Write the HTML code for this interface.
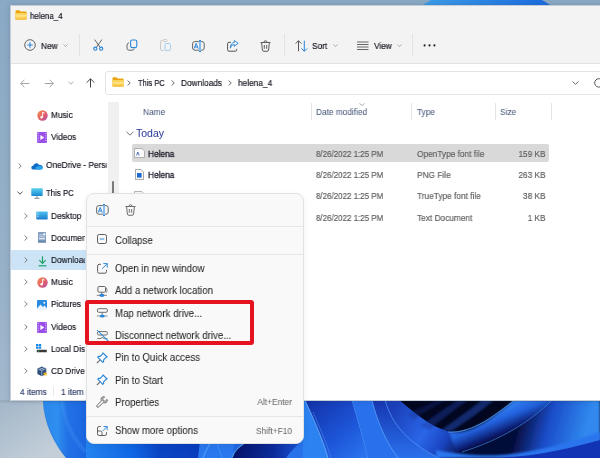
<!DOCTYPE html>
<html><head><meta charset="utf-8">
<style>
*{margin:0;padding:0;box-sizing:border-box}
html,body{width:600px;height:458px;overflow:hidden}
body{position:relative;font-family:"Liberation Sans",sans-serif;background:#8eacc6}
.a{position:absolute}
.t{position:absolute;white-space:nowrap;line-height:1;color:#12121e;-webkit-text-stroke:0.17px currentColor;will-change:transform}
svg{position:absolute;overflow:visible}
.ex{font-size:8.3px}
.mn{font-size:9.7px;color:#262626;-webkit-text-stroke:0.06px currentColor}
.sc{font-size:8.4px;color:#6b6b6b;-webkit-text-stroke:0.05px currentColor}
.gr{color:#5d5d5d}
.hd{color:#4a5a7c;-webkit-text-stroke:0.05px currentColor}
</style></head><body>
<!-- wallpaper -->
<div class="a" style="left:0;top:0;width:600px;height:458px;background:linear-gradient(180deg,#8aa9c4 0%,#97b1c8 60%,#a9bccf 100%)"></div>
<svg width="600" height="458" style="left:0;top:0">
  <defs>
    <linearGradient id="gTop" x1="0" y1="0" x2="1" y2="0">
      <stop offset="0" stop-color="#3d9ee9"/><stop offset="1" stop-color="#1a6ae0"/>
    </linearGradient>
    <linearGradient id="gB1" x1="0" y1="0" x2="1" y2="0">
      <stop offset="0" stop-color="#2f7fe6"/><stop offset="0.5" stop-color="#1f5fe0"/><stop offset="1" stop-color="#1a4fd8"/>
    </linearGradient>
  </defs>
  <polygon points="431,0 542,0 552,6 421,6" fill="url(#gTop)"/>
  <defs>
    <linearGradient id="gBase" x1="43" y1="0" x2="600" y2="0" gradientUnits="userSpaceOnUse">
      <stop offset="0" stop-color="#3b93ee"/><stop offset="0.08" stop-color="#2f82ea"/><stop offset="0.3" stop-color="#2268e2"/><stop offset="0.5" stop-color="#1f5edc"/><stop offset="1" stop-color="#1f5edc"/>
    </linearGradient>
    <linearGradient id="gDarkBand" x1="520" y1="445" x2="580" y2="400" gradientUnits="userSpaceOnUse">
      <stop offset="0" stop-color="#020620"/><stop offset="0.35" stop-color="#0a1c6a"/><stop offset="1" stop-color="#2a86ea"/>
    </linearGradient>
    <linearGradient id="gRibD" x1="470" y1="440" x2="500" y2="405" gradientUnits="userSpaceOnUse">
      <stop offset="0" stop-color="#010416"/><stop offset="0.6" stop-color="#1a48c8"/><stop offset="1" stop-color="#2a6ff0"/>
    </linearGradient>
    <linearGradient id="gMid" x1="310" y1="400" x2="360" y2="458" gradientUnits="userSpaceOnUse">
      <stop offset="0" stop-color="#1232a8"/><stop offset="0.6" stop-color="#1d55d8"/><stop offset="1" stop-color="#2a72ee"/>
    </linearGradient>
    <linearGradient id="gC" x1="395" y1="405" x2="470" y2="450" gradientUnits="userSpaceOnUse">
      <stop offset="0" stop-color="#1a3fb8"/><stop offset="0.45" stop-color="#2a66e8"/><stop offset="0.7" stop-color="#1a44c0"/><stop offset="1" stop-color="#03082a"/>
    </linearGradient>
  </defs>
  <path d="M43,400 L600,400 L600,458 L66,458 C55,445 44,425 43,400 Z" fill="url(#gBase)"/>
  <!-- left light curve -->
  <path d="M62,400 C66,420 76,438 90,452" stroke="#6ab6ff" stroke-width="1" fill="none" opacity="0.5"/>
  <!-- below menu ribbons -->
  <defs>
    <linearGradient id="gBm" x1="86" y1="0" x2="200" y2="0" gradientUnits="userSpaceOnUse">
      <stop offset="0" stop-color="#2484ee"/><stop offset="0.4" stop-color="#1066e4"/><stop offset="0.65" stop-color="#0a44c4"/><stop offset="1" stop-color="#0a3cbc"/>
    </linearGradient>
    <linearGradient id="gBm2" x1="235" y1="0" x2="300" y2="0" gradientUnits="userSpaceOnUse">
      <stop offset="0" stop-color="#04146a"/><stop offset="0.6" stop-color="#0c2c9c"/><stop offset="1" stop-color="#1a52d4"/>
    </linearGradient>
  </defs>
  <rect x="86" y="440" width="114" height="18" fill="url(#gBm)"/>
  <path d="M200,440 L235,440 L232,458 L198,458 Z" fill="#2a78ee"/>
  <path d="M203,458 C205,452 208,447 212,440" stroke="#6ab8ff" stroke-width="1" fill="none" opacity="0.7"/>
  <path d="M222,458 C220,452 218,447 216,440" stroke="#4aa0ff" stroke-width="1" fill="none" opacity="0.6"/>
  <path d="M232,458 C234,450 240,445 250,440 L300,440 L300,458 Z" fill="url(#gBm2)"/>
  <path d="M232,458 C234,450 240,445 250,440" stroke="#5ab0ff" stroke-width="1.2" fill="none" opacity="0.8"/>
  <path d="M286,458 C290,452 296,446 303,440 L303,458 Z" fill="#2a72ea"/>
  <!-- left bright area -->
  <defs>
    <linearGradient id="gGray" x1="0" y1="400" x2="40" y2="458" gradientUnits="userSpaceOnUse">
      <stop offset="0" stop-color="#a2b6c8"/><stop offset="1" stop-color="#c3ced9"/>
    </linearGradient>
    <linearGradient id="gLB" x1="45" y1="0" x2="86" y2="0" gradientUnits="userSpaceOnUse">
      <stop offset="0" stop-color="#2a88ec"/><stop offset="0.3" stop-color="#2f8ef0"/><stop offset="0.55" stop-color="#2272e6"/><stop offset="1" stop-color="#1a66e2"/>
    </linearGradient>
  </defs>
  <path d="M0,400 L44,400 C44,425 55,442 68,458 L0,458 Z" fill="url(#gGray)"/>
  <path d="M43,400 L86,400 L86,458 L66,458 C55,445 44,425 43,400 Z" fill="url(#gLB)"/>
  <path d="M43,400 C44,425 55,442 67,458" stroke="#4a6a90" stroke-width="0.6" fill="none" opacity="0.35"/>
  <path d="M62,400 C64,420 72,438 86,452" stroke="#58aaf8" stroke-width="4" fill="none" opacity="0.18"/>
  <rect x="0" y="400" width="86" height="2.5" fill="#000" opacity="0.06"/>
  <!-- mid ribbons 300-375 -->
  <path d="M303,400 L305,400 C314,420 323,440 328,458 L303,458 Z" fill="#2c82f0"/>
  <path d="M305,400 L352,400 C358,420 364,440 368,458 L328,458 C323,440 314,420 305,400 Z" fill="url(#gMid)"/>
  <path d="M305,400 C314,420 323,440 328,458" stroke="#7cc0ff" stroke-width="1" fill="none" opacity="0.7"/>
  <path d="M313,412 C320,428 327,444 331,458" stroke="#5aaaff" stroke-width="0.8" fill="none" opacity="0.5"/>
  <path d="M352,400 C358,420 364,440 368,458" stroke="#6ab4ff" stroke-width="1" fill="none" opacity="0.7"/>
  <path d="M352,400 L385,400 C392,425 410,445 440,458 L368,458 C364,440 358,420 352,400 Z" fill="#2870ec"/>
  <defs><linearGradient id="gL3" x1="0" y1="400" x2="0" y2="458" gradientUnits="userSpaceOnUse"><stop offset="0" stop-color="#1636b0"/><stop offset="1" stop-color="#2a70ec"/></linearGradient></defs>
  <path d="M372,400 L385,400 C392,425 410,445 440,458 L398,458 C388,445 378,425 372,400 Z" fill="url(#gL3)"/>
  <path d="M372,400 C378,425 388,445 398,458" stroke="#6ab4ff" stroke-width="1" fill="none" opacity="0.6"/>
  <!-- ribbon C -->
  <path d="M385,400 L399,400 C412,410 428,426 450,432 C472,436 495,418 515,400 L600,400 L600,458 L440,458 C410,445 392,425 385,400 Z" fill="url(#gC)"/>
  <path d="M385,400 C392,425 410,445 440,458" stroke="#5aa8ff" stroke-width="1" fill="none" opacity="0.6"/>
  <!-- dark region -->
  <path d="M399,400 C412,410 428,426 450,432 C472,436 495,418 515,400 Z" fill="#02061f"/>
  <path d="M408,414 C420,408 432,403 438,400 L446,400 C436,406 424,412 414,420 Z" fill="#142e88" opacity="0.35" filter="url(#bl)"/>
  <path d="M420,426 C435,415 450,405 458,400 L468,400 C455,410 440,420 430,430 Z" fill="#1a3a9e" opacity="0.45" filter="url(#bl)"/>
  <path d="M440,431 C455,420 472,408 482,400 L494,400 C480,412 465,422 452,431 Z" fill="#2048b0" opacity="0.55" filter="url(#bl)"/>
  <!-- right bright ribbon below D -->
  <defs>
    <linearGradient id="gR2" x1="478" y1="417" x2="490" y2="446" gradientUnits="userSpaceOnUse">
      <stop offset="0" stop-color="#3382f4"/><stop offset="0.35" stop-color="#2260dc"/><stop offset="0.75" stop-color="#0a1a6a"/><stop offset="1" stop-color="#01030f"/>
    </linearGradient>
    <linearGradient id="gR3" x1="515" y1="432" x2="580" y2="450" gradientUnits="userSpaceOnUse">
      <stop offset="0" stop-color="#040a38"/><stop offset="0.45" stop-color="#1a4cc8"/><stop offset="1" stop-color="#3088ee"/>
    </linearGradient>
    <filter id="bl" x="-10%" y="-10%" width="120%" height="120%"><feGaussianBlur stdDeviation="1.2"/></filter>
  </defs>
  <path d="M450,433 C472,435 492,418 515,400 L600,400 L600,458 L462,458 C456,452 452,445 450,433 Z" fill="url(#gR2)" filter="url(#bl)"/>
  <path d="M440,458 C490,445 530,425 552,400 L600,400 L600,458 Z" fill="url(#gR3)" filter="url(#bl)"/>
  <path d="M448,432 C470,434 492,418 515,400" stroke="#5aa8ff" stroke-width="1.1" fill="none" opacity="0.7"/>
  <path d="M462,452 C500,440 530,422 552,400" stroke="#4a98f8" stroke-width="1" fill="none" opacity="0.6"/>
  <!-- bottom bright ribbon -->
  <path d="M436,450 C455,454 478,456 500,455 C540,452 570,442 600,432 L600,440 C570,450 540,458 500,458 L436,458 Z" fill="#2a74ee" filter="url(#bl)"/>
  <path d="M500,458 C540,456 570,448 600,440 L600,458 Z" fill="#1234b4"/>
</svg>

<!-- window -->
<div class="a" style="left:9.5px;top:5px;width:592px;height:395.5px;background:#fff;border:1px solid #c5ced6;border-right:none;box-shadow:0 0 5px rgba(40,60,90,0.22)"></div>
<div class="a" style="left:10.5px;top:6px;width:590px;height:58px;background:#f3f3f3;border-bottom:1px solid #e3e3e3"></div>

<!-- title -->
<svg width="12" height="10" style="left:15px;top:10px" viewBox="0 0 12 10">
  <path d="M0.5,1.4 Q0.5,0.3 1.6,0.3 L4,0.3 Q4.6,0.3 5,0.8 L5.6,1.6 L10.6,1.6 Q11.6,1.6 11.6,2.6 L11.6,8.4 Q11.6,9.5 10.5,9.5 L1.6,9.5 Q0.5,9.5 0.5,8.4 Z" fill="#eaa40e"/>
  <path d="M0.5,3.1 L11.6,3.1 L11.6,8.4 Q11.6,9.5 10.5,9.5 L1.6,9.5 Q0.5,9.5 0.5,8.4 Z" fill="#fdd45a"/>
  <rect x="0.5" y="5" width="11.1" height="1.6" fill="#ffe59a" opacity="0.8"/>
  <rect x="0.5" y="8.2" width="11.1" height="1.3" fill="#f3b834" opacity="0.7"/>
</svg>
<div class="t ex" style="left:29.5px;top:11.94px;font-size:9.20px;letter-spacing:0px;transform-origin:0 0;transform:scaleX(0.8607)">helena_4</div>

<!-- toolbar -->
<svg width="12" height="12" style="left:24px;top:39px" viewBox="0 0 12 12">
  <circle cx="6" cy="6" r="5.3" fill="none" stroke="#555" stroke-width="0.9"/>
  <path d="M6,3.3 V8.7 M3.3,6 H8.7" stroke="#2a86d9" stroke-width="1.1"/>
</svg>
<div class="t ex" style="left:41.3px;top:41.94px;font-size:9.20px;letter-spacing:0px;transform-origin:0 0;transform:scaleX(0.9031)">New</div>
<svg width="5" height="3" style="left:63px;top:44px" viewBox="0 0 5 3"><path d="M0.5,0.5 L2.5,2.5 L4.5,0.5" fill="none" stroke="#888" stroke-width="0.7"/></svg>
<div class="a" style="left:79px;top:34px;width:1px;height:22px;background:#e2e2e2"></div>
<!-- cut -->
<svg width="11" height="12" style="left:92.5px;top:39px" viewBox="0 0 11 12">
  <path d="M1.6,0.6 L7.2,8.4 M8.9,0.6 L3.3,8.4" stroke="#555" stroke-width="0.9" fill="none"/>
  <circle cx="2.3" cy="9.7" r="1.6" fill="none" stroke="#2a86d9" stroke-width="1.1"/>
  <circle cx="8.2" cy="9.7" r="1.6" fill="none" stroke="#2a86d9" stroke-width="1.1"/>
</svg>
<!-- copy -->
<svg width="12" height="12" style="left:125.5px;top:39px" viewBox="0 0 12 12">
  <rect x="4.6" y="1" width="6.2" height="7.6" rx="1.6" fill="none" stroke="#2a86d9" stroke-width="1.1"/>
  <path d="M3,3.8 Q1,4.2 1,6.2 L1,9.2 Q1,11.2 3,11.2 L6,11.2 Q8,11.2 8.4,9.6" fill="none" stroke="#666" stroke-width="1"/>
</svg>
<!-- paste (disabled) -->
<svg width="11" height="12" style="left:159.5px;top:39px" viewBox="0 0 11 12">
  <path d="M2.5,1.5 L1.5,1.5 Q0.6,1.5 0.6,2.5 L0.6,10.5 Q0.6,11.4 1.5,11.4 L4,11.4" fill="none" stroke="#c4c4c4" stroke-width="0.9"/>
  <rect x="3" y="0.5" width="4" height="2" rx="0.6" fill="none" stroke="#c4c4c4" stroke-width="0.8"/>
  <rect x="5" y="4.5" width="5.4" height="7" rx="1" fill="none" stroke="#9ccaf0" stroke-width="0.9"/>
</svg>
<!-- rename -->
<svg width="13" height="12" style="left:192px;top:39.5px" viewBox="0 0 13 12">
  <rect x="0.6" y="1.6" width="11.6" height="8.6" rx="2.2" fill="none" stroke="#666" stroke-width="1"/>
  <rect x="6.9" y="1" width="2.2" height="10" fill="#f3f3f3"/>
  <path d="M8,0.4 V11.6 M7,0.6 H9 M7,11.4 H9" stroke="#2a86d9" stroke-width="1.05"/>
  <path d="M2.2,8.6 L4.2,3.4 L6.2,8.6 M2.9,7 H5.5" fill="none" stroke="#2a86d9" stroke-width="1"/>
</svg>
<!-- share -->
<svg width="12" height="12" style="left:226.5px;top:39.5px" viewBox="0 0 12 12">
  <path d="M4,2.3 L2,2.3 Q0.6,2.3 0.6,3.7 L0.6,9.8 Q0.6,11.2 2,11.2 L8.3,11.2 Q9.7,11.2 9.7,9.8 L9.7,8.8" fill="none" stroke="#555" stroke-width="1"/>
  <path d="M3.3,8.2 Q3.6,4.6 7.3,4.4 L7.3,6.3 L11.2,3.3 L7.3,0.5 L7.3,2.4 Q3.6,2.7 3.3,8.2 Z" fill="none" stroke="#2a86d9" stroke-width="0.95" stroke-linejoin="round"/>
</svg>
<!-- delete -->
<svg width="11" height="12" style="left:260px;top:39.5px" viewBox="0 0 11 12">
  <path d="M0.5,2.5 H10.5 M4,2.3 Q4,0.7 5.5,0.7 Q7,0.7 7,2.3 M1.6,2.7 L2.4,10 Q2.6,11.3 3.9,11.3 L7.1,11.3 Q8.4,11.3 8.6,10 L9.4,2.7 M4.3,5 V8.8 M6.7,5 V8.8" fill="none" stroke="#555" stroke-width="0.95"/>
</svg>
<div class="a" style="left:283.5px;top:34px;width:1px;height:22px;background:#e2e2e2"></div>
<!-- sort -->
<svg width="13" height="12" style="left:294.5px;top:39.5px" viewBox="0 0 13 12">
  <path d="M3.5,11.3 V0.8 M0.6,3.6 L3.5,0.7 L6.4,3.6" fill="none" stroke="#555" stroke-width="1"/>
  <path d="M9.3,0.7 V11.2 M6.4,8.4 L9.3,11.3 L12.2,8.4" fill="none" stroke="#2a86d9" stroke-width="1"/>
</svg>
<div class="t ex" style="left:312px;top:41.94px;font-size:9.20px;letter-spacing:0px;transform-origin:0 0;transform:scaleX(0.9027)">Sort</div>
<svg width="5" height="3" style="left:332.5px;top:44px" viewBox="0 0 5 3"><path d="M0.5,0.5 L2.5,2.5 L4.5,0.5" fill="none" stroke="#888" stroke-width="0.7"/></svg>
<!-- view -->
<svg width="12" height="10" style="left:356.5px;top:40.5px" viewBox="0 0 12 10">
  <path d="M0,1 H11.5 M0,3.5 H11.5 M0,6 H11.5 M0,8.5 H11.5" stroke="#555" stroke-width="0.9"/>
</svg>
<div class="t ex" style="left:373.5px;top:41.94px;font-size:9.20px;letter-spacing:0px;transform-origin:0 0;transform:scaleX(0.9035)">View</div>
<svg width="5" height="3" style="left:396.5px;top:44px" viewBox="0 0 5 3"><path d="M0.5,0.5 L2.5,2.5 L4.5,0.5" fill="none" stroke="#888" stroke-width="0.7"/></svg>
<div class="a" style="left:412px;top:34px;width:1px;height:22px;background:#e2e2e2"></div>
<svg width="13" height="3" style="left:423px;top:43.5px" viewBox="0 0 13 3">
  <circle cx="1.6" cy="1.4" r="1.05" fill="#222"/><circle cx="6.5" cy="1.4" r="1.05" fill="#222"/><circle cx="11.4" cy="1.4" r="1.05" fill="#222"/>
</svg>

<!-- nav arrows -->
<svg width="10" height="9" style="left:19.5px;top:78.5px" viewBox="0 0 10 9"><path d="M9.3,4.5 H0.8 M4.4,0.8 L0.7,4.5 L4.4,8.2" fill="none" stroke="#9a9a9a" stroke-width="0.9"/></svg>
<svg width="10" height="9" style="left:44px;top:78.5px" viewBox="0 0 10 9"><path d="M0.7,4.5 H9.2 M5.6,0.8 L9.3,4.5 L5.6,8.2" fill="none" stroke="#9a9a9a" stroke-width="0.9"/></svg>
<svg width="6" height="4" style="left:67.5px;top:81px" viewBox="0 0 6 4"><path d="M0.5,0.7 L3,3.2 L5.5,0.7" fill="none" stroke="#9a9a9a" stroke-width="0.8"/></svg>
<svg width="9" height="10" style="left:86px;top:78px" viewBox="0 0 9 10"><path d="M4.5,9.5 V0.9 M0.7,4.6 L4.5,0.8 L8.3,4.6" fill="none" stroke="#3a3a3a" stroke-width="0.95"/></svg>

<!-- address bar -->
<div class="a" style="left:105px;top:71px;width:500px;height:24px;background:#fff;border:1px solid #e3e3e3;border-radius:3px"></div>
<svg width="12" height="10" style="left:111.5px;top:77px" viewBox="0 0 12 10">
  <path d="M0.5,1.4 Q0.5,0.3 1.6,0.3 L4,0.3 Q4.6,0.3 5,0.8 L5.6,1.6 L10.6,1.6 Q11.6,1.6 11.6,2.6 L11.6,8.4 Q11.6,9.5 10.5,9.5 L1.6,9.5 Q0.5,9.5 0.5,8.4 Z" fill="#eaa40e"/>
  <path d="M0.5,3.1 L11.6,3.1 L11.6,8.4 Q11.6,9.5 10.5,9.5 L1.6,9.5 Q0.5,9.5 0.5,8.4 Z" fill="#fdd45a"/>
  <rect x="0.5" y="5" width="11.1" height="1.6" fill="#ffe59a" opacity="0.8"/>
  <rect x="0.5" y="8.2" width="11.1" height="1.3" fill="#f3b834" opacity="0.7"/>
</svg>
<svg width="4" height="6" style="left:127px;top:79.5px" viewBox="0 0 4 6"><path d="M0.7,0.5 L3.2,3 L0.7,5.5" fill="none" stroke="#444" stroke-width="0.8"/></svg>
<div class="t ex" style="left:137.7px;top:79.2px;font-size:9.20px;letter-spacing:0px;transform-origin:0 0;transform:scaleX(0.82)">This PC</div>
<svg width="4" height="6" style="left:170.5px;top:79.5px" viewBox="0 0 4 6"><path d="M0.7,0.5 L3.2,3 L0.7,5.5" fill="none" stroke="#444" stroke-width="0.8"/></svg>
<div class="t ex" style="left:181px;top:79.2px;font-size:9.20px;letter-spacing:0px;transform-origin:0 0;transform:scaleX(0.9034)">Downloads</div>
<svg width="4" height="6" style="left:228px;top:79.5px" viewBox="0 0 4 6"><path d="M0.7,0.5 L3.2,3 L0.7,5.5" fill="none" stroke="#444" stroke-width="0.8"/></svg>
<div class="t ex" style="left:238.3px;top:79.2px;font-size:9.20px;letter-spacing:0px;transform-origin:0 0;transform:scaleX(0.9033)">helena_4</div>
<svg width="7" height="4" style="left:571.5px;top:80.5px" viewBox="0 0 7 4"><path d="M0.5,0.5 L3.5,3.3 L6.5,0.5" fill="none" stroke="#555" stroke-width="0.85"/></svg>
<svg width="10" height="10" style="left:593.5px;top:77.5px" viewBox="0 0 10 10"><path d="M8.6,3 A4.2,4.2 0 1 0 8.9,6" fill="none" stroke="#555" stroke-width="1"/><path d="M8.8,0.6 V3.3 H6.1" fill="none" stroke="#555" stroke-width="1"/></svg>

<!-- nav pane scrollbar track -->
<div class="a" style="left:107.5px;top:102px;width:11.5px;height:298px;background:#f0f0f0"></div>
<div class="a" style="left:112.3px;top:181px;width:1.8px;height:12.5px;background:#7a7a7a;border-radius:1px"></div>


<!-- nav highlight -->
<div class="a" style="left:11px;top:250px;width:96.5px;height:20px;background:#cde4f7"></div>
<!-- nav items -->
<svg width="11" height="11" style="left:36.5px;top:110px" viewBox="0 0 11 11">
  <defs><linearGradient id="gMu" x1="0" y1="0" x2="1" y2="1"><stop offset="0" stop-color="#f7904a"/><stop offset="0.55" stop-color="#e0606a"/><stop offset="1" stop-color="#b04ab0"/></linearGradient></defs>
  <circle cx="5.5" cy="5.5" r="5.2" fill="url(#gMu)"/>
  <path d="M5.6,2.3 V7.2 M5.6,2.3 L7.6,3.1" stroke="#fff" stroke-width="0.9" fill="none"/><circle cx="4.6" cy="7.3" r="1.2" fill="#fff"/>
</svg>
<div class="t ex" style="left:51px;top:111.34px;font-size:9.20px;letter-spacing:0px;transform-origin:0 0;transform:scaleX(0.9030)">Music</div>
<svg width="10" height="11" style="left:37px;top:131.5px" viewBox="0 0 10 11">
  <rect x="0" y="0" width="10" height="11" rx="0.8" fill="#9a50e8"/>
  <path d="M1.1,1 V10.5 M8.9,1 V10.5" stroke="#e8d8ff" stroke-width="1" stroke-dasharray="1 1.3"/>
  <path d="M3.4,3 L7.2,5.5 L3.4,8 Z" fill="#fff"/>
</svg>
<div class="t ex" style="left:51px;top:133.44px;font-size:9.20px;letter-spacing:0px;transform-origin:0 0;transform:scaleX(0.9027)">Videos</div>
<svg width="4" height="6" style="left:18px;top:162.5px" viewBox="0 0 4 6"><path d="M0.7,0.5 L3.2,3 L0.7,5.5" fill="none" stroke="#666" stroke-width="0.85"/></svg>
<svg width="12" height="8" style="left:30.5px;top:161.5px" viewBox="0 0 12 8">
  <path d="M2.5,7.6 Q0.3,7.6 0.3,5.7 Q0.3,4 2.2,3.8 Q2.8,1.3 5.3,1.3 Q7,1.3 7.9,2.7 Q11.7,2.6 11.7,5.3 Q11.7,7.6 9.4,7.6 Z" fill="#0f6cc8"/><path d="M4.5,7.6 Q4.2,4.6 7.2,4.2 Q9.2,3.2 10.8,4.4 Q11.7,5 11.7,6 Q11.6,7.6 9.4,7.6 Z" fill="#2aa6ee"/>
</svg>
<div class="t ex" style="left:45.6px;top:161.34px;width:68.08px;overflow:hidden;font-size:9.20px;letter-spacing:0px;transform-origin:0 0;transform:scaleX(0.9033)">OneDrive - Personal</div>
<svg width="6" height="4" style="left:17px;top:191px" viewBox="0 0 6 4"><path d="M0.5,0.6 L3,3.2 L5.5,0.6" fill="none" stroke="#333" stroke-width="0.85"/></svg>
<svg width="12" height="11" style="left:30.5px;top:188px" viewBox="0 0 12 11">
  <defs><linearGradient id="gPc" x1="0" y1="0" x2="0" y2="1"><stop offset="0" stop-color="#5ad0f0"/><stop offset="1" stop-color="#1a8ad0"/></linearGradient></defs>
  <rect x="0.3" y="0.3" width="11.4" height="7.6" rx="0.6" fill="url(#gPc)"/>
  <path d="M6,8 V9.8 M3.5,10.3 H8.5" stroke="#6a7a8a" stroke-width="0.9"/>
</svg>
<div class="t ex" style="left:45.6px;top:188.94px;font-size:9.20px;letter-spacing:0px;transform-origin:0 0;transform:scaleX(0.85)">This PC</div>
<svg width="4" height="6" style="left:23.5px;top:212.7px" viewBox="0 0 4 6"><path d="M0.7,0.5 L3.2,3 L0.7,5.5" fill="none" stroke="#666" stroke-width="0.85"/></svg>
<div class="t ex" style="left:51px;top:211.64px;width:38.24px;overflow:hidden;font-size:9.20px;letter-spacing:0px;transform-origin:0 0;transform:scaleX(0.9022)">Desktop</div>
<svg width="4" height="6" style="left:23.5px;top:235.0px" viewBox="0 0 4 6"><path d="M0.7,0.5 L3.2,3 L0.7,5.5" fill="none" stroke="#666" stroke-width="0.85"/></svg>
<div class="t ex" style="left:51px;top:233.94px;width:38.20px;overflow:hidden;font-size:9.20px;letter-spacing:0px;transform-origin:0 0;transform:scaleX(0.9032)">Documents</div>
<svg width="4" height="6" style="left:23.5px;top:257.0px" viewBox="0 0 4 6"><path d="M0.7,0.5 L3.2,3 L0.7,5.5" fill="none" stroke="#666" stroke-width="0.85"/></svg>
<div class="t ex" style="left:51px;top:255.94px;width:38.19px;overflow:hidden;font-size:9.20px;letter-spacing:0px;transform-origin:0 0;transform:scaleX(0.9034)">Downloads</div>
<svg width="4" height="6" style="left:23.5px;top:279.2px" viewBox="0 0 4 6"><path d="M0.7,0.5 L3.2,3 L0.7,5.5" fill="none" stroke="#666" stroke-width="0.85"/></svg>
<div class="t ex" style="left:51px;top:278.14px;width:38.21px;overflow:hidden;font-size:9.20px;letter-spacing:0px;transform-origin:0 0;transform:scaleX(0.9030)">Music</div>
<svg width="4" height="6" style="left:23.5px;top:301.4px" viewBox="0 0 4 6"><path d="M0.7,0.5 L3.2,3 L0.7,5.5" fill="none" stroke="#666" stroke-width="0.85"/></svg>
<div class="t ex" style="left:51px;top:300.34px;width:38.20px;overflow:hidden;font-size:9.20px;letter-spacing:0px;transform-origin:0 0;transform:scaleX(0.9031)">Pictures</div>
<svg width="4" height="6" style="left:23.5px;top:323.6px" viewBox="0 0 4 6"><path d="M0.7,0.5 L3.2,3 L0.7,5.5" fill="none" stroke="#666" stroke-width="0.85"/></svg>
<div class="t ex" style="left:51px;top:322.54px;width:38.22px;overflow:hidden;font-size:9.20px;letter-spacing:0px;transform-origin:0 0;transform:scaleX(0.9027)">Videos</div>
<svg width="4" height="6" style="left:23.5px;top:346.0px" viewBox="0 0 4 6"><path d="M0.7,0.5 L3.2,3 L0.7,5.5" fill="none" stroke="#666" stroke-width="0.85"/></svg>
<div class="t ex" style="left:51px;top:344.94px;width:38.22px;overflow:hidden;font-size:9.20px;letter-spacing:0px;transform-origin:0 0;transform:scaleX(0.9027)">Local Disk (C:)</div>
<svg width="4" height="6" style="left:23.5px;top:368.4px" viewBox="0 0 4 6"><path d="M0.7,0.5 L3.2,3 L0.7,5.5" fill="none" stroke="#666" stroke-width="0.85"/></svg>
<div class="t ex" style="left:51px;top:367.34px;width:38.20px;overflow:hidden;font-size:9.20px;letter-spacing:0px;transform-origin:0 0;transform:scaleX(0.9031)">CD Drive (D:)</div>

<svg width="12" height="9" style="left:36px;top:211px" viewBox="0 0 12 9">
  <defs><linearGradient id="gDk" x1="0" y1="0" x2="0" y2="1"><stop offset="0" stop-color="#4fc3f0"/><stop offset="1" stop-color="#1a7ccc"/></linearGradient></defs>
  <rect x="0.3" y="0.5" width="11.4" height="8" rx="0.8" fill="url(#gDk)"/>
  <path d="M1.5,2 H2.5 M1.5,3.8 H2.5 M1.5,5.6 H2.5" stroke="#fff" stroke-width="0.8"/>
</svg>
<svg width="9" height="11" style="left:38px;top:232px" viewBox="0 0 9 11">
  <rect x="0" y="0" width="8" height="10.6" rx="0.6" fill="#7f9dc0"/>
  <rect x="1" y="2.2" width="4" height="1.2" fill="#c0d0e2"/>
  <rect x="1" y="4.2" width="6" height="1.2" fill="#c0d0e2"/>
  <rect x="1" y="6" width="6" height="1.4" fill="#e0e8f2"/>
  <rect x="5.3" y="1.3" width="2" height="2" fill="#ffffff"/>
  <rect x="0" y="8.6" width="8" height="2" fill="#6a88ae"/>
</svg>
<svg width="9" height="11" style="left:37.5px;top:255.5px" viewBox="0 0 9 11">
  <path d="M4.5,0.3 V7.2 M1.3,4.2 L4.5,7.4 L7.7,4.2" fill="none" stroke="#1aa36a" stroke-width="1.2"/>
  <path d="M0.6,9.8 H8.4" stroke="#1aa36a" stroke-width="1.2"/>
</svg>
<svg width="11" height="11" style="left:36.5px;top:277px" viewBox="0 0 11 11">
  <circle cx="5.5" cy="5.5" r="5.2" fill="url(#gMu)"/>
  <path d="M5.6,2.3 V7.2 M5.6,2.3 L7.6,3.1" stroke="#fff" stroke-width="0.9" fill="none"/><circle cx="4.6" cy="7.3" r="1.2" fill="#fff"/>
</svg>
<svg width="10" height="10" style="left:37px;top:299.5px" viewBox="0 0 10 10">
  <rect x="0" y="0" width="10" height="10" rx="0.8" fill="#2a8ae0"/>
  <path d="M0,8.5 L3.5,4.5 L6,7 L7.5,5.6 L10,8.2 V10 H0 Z" fill="#eaf4ff"/>
  <circle cx="7.3" cy="2.8" r="1" fill="#eaf4ff"/>
</svg>
<svg width="10" height="11" style="left:37px;top:321.5px" viewBox="0 0 10 11">
  <rect x="0" y="0" width="10" height="11" rx="0.8" fill="#9a50e8"/>
  <path d="M1.1,1 V10.5 M8.9,1 V10.5" stroke="#e8d8ff" stroke-width="1" stroke-dasharray="1 1.3"/>
  <path d="M3.4,3 L7.2,5.5 L3.4,8 Z" fill="#fff"/>
</svg>
<svg width="11" height="9" style="left:36px;top:343.5px" viewBox="0 0 11 9">
  <rect x="0" y="0" width="2.4" height="2.2" rx="0.3" fill="#1a8ae8"/><rect x="2.8" y="0" width="2.4" height="2.2" rx="0.3" fill="#1a8ae8"/>
  <rect x="0" y="2.6" width="2.4" height="2.2" rx="0.3" fill="#1a8ae8"/><rect x="2.8" y="2.6" width="2.4" height="2.2" rx="0.3" fill="#1a8ae8"/>
  <rect x="0.8" y="5.7" width="10" height="2.6" rx="0.4" fill="#3a3a3a"/>
  <path d="M2,7 H3.2" stroke="#3ad06a" stroke-width="0.9"/>
</svg>
<svg width="11" height="11" style="left:36.5px;top:365.5px" viewBox="0 0 11 11">
  <path d="M4.8,0.4 L9.3,2.4 L9.3,7.8 L4.8,10.2 L0.4,8 L0.4,2.6 Z" fill="#2f4f7e"/>
  <path d="M0.4,2.6 L4.8,4.8 L9.3,2.4 M4.8,4.8 V10.2 M2.2,1.6 L7,3.6 M7.2,1.4 L2.8,3.8" stroke="#c8d8ea" stroke-width="0.6" fill="none"/>
  <path d="M8.2,5.6 L8.9,7.2 L10.6,7.3 L9.3,8.4 L9.8,10.1 L8.2,9.1 L6.7,10.1 L7.1,8.4 L5.8,7.3 L7.5,7.2 Z" fill="#f5b51c"/>
</svg>
<!-- status bar -->
<div class="t ex gr" style="left:19.6px;top:387.94px;color:#34406a;font-size:9.20px;letter-spacing:0px;transform-origin:0 0;transform:scaleX(0.9030)">4 items</div>
<div class="a" style="left:53px;top:387px;width:1px;height:9px;background:#e8e8e8"></div>
<div class="t ex gr" style="left:61px;top:387.94px;color:#34406a;width:27.68px;overflow:hidden;font-size:9.20px;letter-spacing:0px;transform-origin:0 0;transform:scaleX(0.9032)">1 item selected</div>


<!-- file list header -->
<div class="t ex hd" style="left:142.5px;top:107.94px;font-size:9.20px;letter-spacing:0px;transform-origin:0 0;transform:scaleX(0.9031)">Name</div>
<div class="a" style="left:311px;top:102.5px;width:1px;height:17.5px;background:#e5e5e5"></div>
<svg width="6" height="3" style="left:359px;top:102.5px" viewBox="0 0 6 3"><path d="M0.5,0.5 L3,2.5 L5.5,0.5" fill="none" stroke="#8a8a8a" stroke-width="0.7"/></svg>
<div class="t ex hd" style="left:316px;top:107.94px;font-size:9.20px;letter-spacing:0px;transform-origin:0 0;transform:scaleX(0.9033)">Date modified</div>
<div class="a" style="left:411px;top:102.5px;width:1px;height:17.5px;background:#e5e5e5"></div>
<div class="t ex hd" style="left:417px;top:107.94px;font-size:9.20px;letter-spacing:0px;transform-origin:0 0;transform:scaleX(0.9035)">Type</div>
<div class="a" style="left:495px;top:102.5px;width:1px;height:17.5px;background:#e5e5e5"></div>
<div class="t ex hd" style="left:499.8px;top:107.94px;font-size:9.20px;letter-spacing:0px;transform-origin:0 0;transform:scaleX(0.9030)">Size</div>
<div class="a" style="left:551px;top:102.5px;width:1px;height:17.5px;background:#e5e5e5"></div>
<!-- group header -->
<svg width="8" height="5" style="left:125.5px;top:130.8px" viewBox="0 0 8 5"><path d="M0.5,0.6 L4,4.2 L7.5,0.6" fill="none" stroke="#555" stroke-width="0.8"/></svg>
<div class="t" style="left:136.3px;top:128px;font-size:10.5px;color:#2f3d9c;-webkit-text-stroke:0.05px currentColor">Today</div>
<!-- selected row -->
<div class="a" style="left:131.5px;top:144px;width:417px;height:18px;background:#d9d9d9;border-radius:2px"></div>
<div class="t ex" style="left:148.3px;top:149.74px;color:#121222;-webkit-text-stroke:0.28px currentColor;font-size:9.20px;letter-spacing:0px;transform-origin:0 0;transform:scaleX(0.9029)">Helena</div>
<div class="t ex gr" style="left:316px;top:149.74px;letter-spacing:0px;font-size:9.20px;transform-origin:0 0;transform:scaleX(0.8658)">8/26/2022 1:25 PM</div>
<div class="t ex gr" style="left:417px;top:149.74px;font-size:9.20px;letter-spacing:0px;transform-origin:0 0;transform:scaleX(0.9030)">OpenType font file</div>
<div class="t ex gr" style="left:446px;top:149.74px;width:99.6px;text-align:right;font-size:9.20px;letter-spacing:0px;transform-origin:100% 0;transform:scaleX(0.9031)">159 KB</div>
<div class="t ex" style="left:148.3px;top:170.94px;color:#121222;-webkit-text-stroke:0.28px currentColor;font-size:9.20px;letter-spacing:0px;transform-origin:0 0;transform:scaleX(0.9029)">Helena</div>
<div class="t ex gr" style="left:316px;top:170.94px;letter-spacing:0px;font-size:9.20px;transform-origin:0 0;transform:scaleX(0.8658)">8/26/2022 1:25 PM</div>
<div class="t ex gr" style="left:417px;top:170.94px;font-size:9.20px;letter-spacing:0px;transform-origin:0 0;transform:scaleX(0.9028)">PNG File</div>
<div class="t ex gr" style="left:446px;top:170.94px;width:99.6px;text-align:right;font-size:9.20px;letter-spacing:0px;transform-origin:100% 0;transform:scaleX(0.9031)">263 KB</div>

<div class="t ex gr" style="left:316px;top:192.44px;letter-spacing:0px;font-size:9.20px;transform-origin:0 0;transform:scaleX(0.8658)">8/26/2022 1:25 PM</div>
<div class="t ex gr" style="left:417px;top:192.44px;font-size:9.20px;letter-spacing:0px;transform-origin:0 0;transform:scaleX(0.9029)">TrueType font file</div>
<div class="t ex gr" style="left:446px;top:192.44px;width:99.6px;text-align:right;font-size:9.20px;letter-spacing:0px;transform-origin:100% 0;transform:scaleX(0.9032)">38 KB</div>

<div class="t ex gr" style="left:316px;top:213.94px;letter-spacing:0px;font-size:9.20px;transform-origin:0 0;transform:scaleX(0.8658)">8/26/2022 1:25 PM</div>
<div class="t ex gr" style="left:417px;top:213.94px;font-size:9.20px;letter-spacing:0px;transform-origin:0 0;transform:scaleX(0.9031)">Text Document</div>
<div class="t ex gr" style="left:446px;top:213.94px;width:99.6px;text-align:right;font-size:9.20px;letter-spacing:0px;transform-origin:100% 0;transform:scaleX(0.9035)">1 KB</div>

<!-- file icons -->
<svg width="11" height="10" style="left:134px;top:147.5px" viewBox="0 0 11 10">
  <path d="M0.5,0.5 H8 L10.5,3 V9.5 H0.5 Z" fill="#fafafa" stroke="#9a9a9a" stroke-width="0.7"/>
  <path d="M2.5,7.5 L3.8,4 L5.1,7.5" fill="none" stroke="#2a5ab0" stroke-width="0.8"/>
</svg>
<svg width="9" height="11" style="left:135px;top:169px" viewBox="0 0 9 11">
  <path d="M0.5,0.5 H6 L8.5,3 V10.5 H0.5 Z" fill="#fafafa" stroke="#888" stroke-width="0.7"/>
  <rect x="2" y="4" width="4.6" height="4.6" fill="#1a6ad0"/>
</svg>
<svg width="11" height="11" style="left:134px;top:190.8px" viewBox="0 0 11 11">
  <path d="M0.5,0.5 H8 L10.5,3 V10.5 H0.5 Z" fill="#fafafa" stroke="#999" stroke-width="0.7"/>
</svg>


<!-- context menu -->
<div class="a" style="left:85.5px;top:193.3px;width:218.3px;height:251px;background:#f9f9f9;border:1px solid #e2e2e2;border-radius:8px;box-shadow:0 2px 6px rgba(0,0,0,0.06)"></div>
<div class="a" style="left:86.5px;top:226px;width:216.3px;height:1px;background:#e6e6e6"></div>
<div class="a" style="left:86.5px;top:253.5px;width:216.3px;height:1px;background:#e6e6e6"></div>
<div class="a" style="left:86.5px;top:416px;width:216.3px;height:1px;background:#e6e6e6"></div>
<!-- rename -->
<svg width="13" height="12" style="left:95.5px;top:203.5px" viewBox="0 0 13 12">
  <rect x="0.6" y="1.6" width="11.6" height="8.6" rx="2.2" fill="none" stroke="#666" stroke-width="1"/>
  <rect x="6.9" y="1" width="2.2" height="10" fill="#f9f9f9"/>
  <path d="M8,0.4 V11.6 M7,0.6 H9 M7,11.4 H9" stroke="#2a86d9" stroke-width="1.05"/>
  <path d="M2.2,8.6 L4.2,3.4 L6.2,8.6 M2.9,7 H5.5" fill="none" stroke="#2a86d9" stroke-width="1"/>
</svg>
<svg width="11" height="12" style="left:124.5px;top:204px" viewBox="0 0 11 12">
  <path d="M0.5,2.5 H10.5 M4,2.3 Q4,0.7 5.5,0.7 Q7,0.7 7,2.3 M1.6,2.7 L2.4,10 Q2.6,11.3 3.9,11.3 L7.1,11.3 Q8.4,11.3 8.6,10 L9.4,2.7 M4.3,5 V8.8 M6.7,5 V8.8" fill="none" stroke="#666" stroke-width="0.95"/>
</svg>
<!-- collapse -->
<svg width="10" height="10" style="left:96.8px;top:234.3px" viewBox="0 0 10 10">
  <rect x="0.5" y="0.5" width="9" height="9" rx="1.8" fill="none" stroke="#555" stroke-width="0.95"/>
  <path d="M2.7,5 H7.3" stroke="#2a86d9" stroke-width="1"/>
</svg>
<!-- open in new window -->
<svg width="11" height="11" style="left:96.5px;top:263px" viewBox="0 0 11 11">
  <path d="M4,1.3 H2.2 Q0.6,1.3 0.6,2.9 V8.6 Q0.6,10.2 2.2,10.2 H7.9 Q9.5,10.2 9.5,8.6 V6.8" fill="none" stroke="#555" stroke-width="0.95"/>
  <path d="M6.3,0.6 H10.3 V4.6 M10.2,0.7 L5,5.9" fill="none" stroke="#2a86d9" stroke-width="0.95"/>
</svg>
<!-- add network location -->
<svg width="11" height="11" style="left:96.5px;top:285.5px" viewBox="0 0 11 11">
  <path d="M8.6,1.6 Q9.9,1.8 9.9,3 V5.4 Q9.9,6.4 8.9,6.6" fill="none" stroke="#777" stroke-width="0.9"/>
  <rect x="0.9" y="0.5" width="7.6" height="5.7" rx="1.2" fill="none" stroke="#666" stroke-width="1"/>
  <path d="M4.7,6.2 V8" stroke="#666" stroke-width="0.9"/>
  <path d="M-0.2,9.3 H9.9" stroke="#666" stroke-width="0.8"/>
  <ellipse cx="4.9" cy="9.3" rx="2.6" ry="1.6" fill="#2a86d9"/>
</svg>
<!-- map network drive -->
<svg width="11" height="10" style="left:96.5px;top:308.3px" viewBox="0 0 11 10">
  <rect x="0.4" y="0.7" width="10" height="3.6" rx="1.3" fill="none" stroke="#666" stroke-width="0.95"/>
  <path d="M5.2,4.3 V6.5" stroke="#666" stroke-width="0.9"/>
  <path d="M-0.2,8 H10.6" stroke="#777" stroke-width="0.8"/>
  <ellipse cx="5.2" cy="8" rx="2.5" ry="1.5" fill="#2a86d9"/>
</svg>
<!-- disconnect -->
<svg width="11" height="11" style="left:96.5px;top:329.8px" viewBox="0 0 11 11">
  <rect x="0.4" y="1.6" width="10" height="3.4" rx="1.3" fill="none" stroke="#666" stroke-width="0.95"/>
  <path d="M0.2,8.6 H3 Q5.2,6.6 7.4,8.6 H10.4" fill="none" stroke="#666" stroke-width="0.9"/>
  <path d="M0,0 L11.3,11.2" stroke="#2a86d9" stroke-width="1.05"/>
</svg>
<!-- pin quick -->
<svg width="12" height="12" style="left:96px;top:351.5px" viewBox="0 0 12 12">
  <path d="M7,0.9 L11.1,5 L9.8,5.6 L7.6,7.8 L7.6,9.5 L6.8,10.3 L1.7,5.2 L2.5,4.4 L4.2,4.4 L6.4,2.2 Z" fill="none" stroke="#2a86d9" stroke-width="1.15" stroke-linejoin="round"/>
  <path d="M4.2,7.8 L0.8,11.2" stroke="#6a6a6a" stroke-width="1.05"/>
</svg>
<svg width="12" height="12" style="left:96px;top:373.5px" viewBox="0 0 12 12">
  <path d="M7,0.9 L11.1,5 L9.8,5.6 L7.6,7.8 L7.6,9.5 L6.8,10.3 L1.7,5.2 L2.5,4.4 L4.2,4.4 L6.4,2.2 Z" fill="none" stroke="#2a86d9" stroke-width="1.15" stroke-linejoin="round"/>
  <path d="M4.2,7.8 L0.8,11.2" stroke="#6a6a6a" stroke-width="1.05"/>
</svg>
<!-- properties wrench -->
<svg width="12" height="12" style="left:96px;top:396px" viewBox="0 0 12 12">
  <path d="M7.6,0.7 Q5.2,0.9 5.1,3.3 Q5.1,4.2 5.5,4.9 L1.1,9.3 Q0.3,10.2 1.1,11 Q1.9,11.7 2.8,10.9 L7.2,6.5 Q7.9,6.9 8.8,6.9 Q11.2,6.8 11.3,4.4 Q11.3,3.9 11.1,3.4 L9.2,5.2 L7,5 L6.8,2.8 L8.6,0.9 Q8.1,0.7 7.6,0.7 Z" fill="none" stroke="#555" stroke-width="0.9" stroke-linejoin="round"/>
</svg>
<!-- show more options -->
<svg width="11" height="10" style="left:96.8px;top:425.8px" viewBox="0 0 11 10">
  <path d="M3.8,0.5 H2.2 Q0.5,0.5 0.5,2.2 V7.8 Q0.5,9.5 2.2,9.5 H7.8 Q9.5,9.5 9.5,7.8 V6.2" fill="none" stroke="#555" stroke-width="0.95"/>
  <path d="M0.5,5 H3.5 Q5,5 5,6.5 V9.5" fill="none" stroke="#555" stroke-width="0.9"/>
  <path d="M6.5,0.5 H10.2 V4.2 M10.1,0.6 L5.8,4.9" fill="none" stroke="#2a86d9" stroke-width="0.95"/>
</svg>
<div class="t mn" style="left:115.3px;top:234.80px;font-size:10.70px;letter-spacing:0px;transform-origin:0 0;transform:scaleX(0.9065)">Collapse</div>
<div class="t mn" style="left:115.3px;top:263.30px;font-size:10.70px;letter-spacing:0px;transform-origin:0 0;transform:scaleX(0.9065)">Open in new window</div>
<div class="t mn" style="left:115.3px;top:285.30px;font-size:10.70px;letter-spacing:0px;transform-origin:0 0;transform:scaleX(0.9064)">Add a network location</div>
<div class="t mn" style="left:115.3px;top:307.90px;font-size:10.70px;letter-spacing:0px;transform-origin:0 0;transform:scaleX(0.9065)">Map network drive...</div>
<div class="t mn" style="left:115.3px;top:330.30px;font-size:10.70px;letter-spacing:0px;transform-origin:0 0;transform:scaleX(0.9066)">Disconnect network drive...</div>
<div class="t mn" style="left:115.3px;top:352.30px;font-size:10.70px;letter-spacing:0px;transform-origin:0 0;transform:scaleX(0.9064)">Pin to Quick access</div>
<div class="t mn" style="left:115.3px;top:375.00px;font-size:10.70px;letter-spacing:0px;transform-origin:0 0;transform:scaleX(0.9066)">Pin to Start</div>
<div class="t mn" style="left:115.3px;top:396.60px;font-size:10.70px;letter-spacing:0px;transform-origin:0 0;transform:scaleX(0.9064)">Properties</div>
<div class="t mn" style="left:115.3px;top:425.30px;font-size:10.70px;letter-spacing:0px;transform-origin:0 0;transform:scaleX(0.9062)">Show more options</div>
<div class="t sc" style="left:200px;width:92px;text-align:right;top:397.87px;font-size:9.20px;letter-spacing:0px;transform-origin:100% 0;transform:scaleX(0.9121)">Alt+Enter</div>
<div class="t sc" style="left:200px;width:92px;text-align:right;top:426.57px;font-size:9.20px;letter-spacing:0px;transform-origin:100% 0;transform:scaleX(0.9116)">Shift+F10</div>

<!-- red highlight box -->
<div class="a" style="left:85.3px;top:300px;width:168.7px;height:45.4px;border:4px solid #e5131f;border-radius:3px"></div>

</body></html>
